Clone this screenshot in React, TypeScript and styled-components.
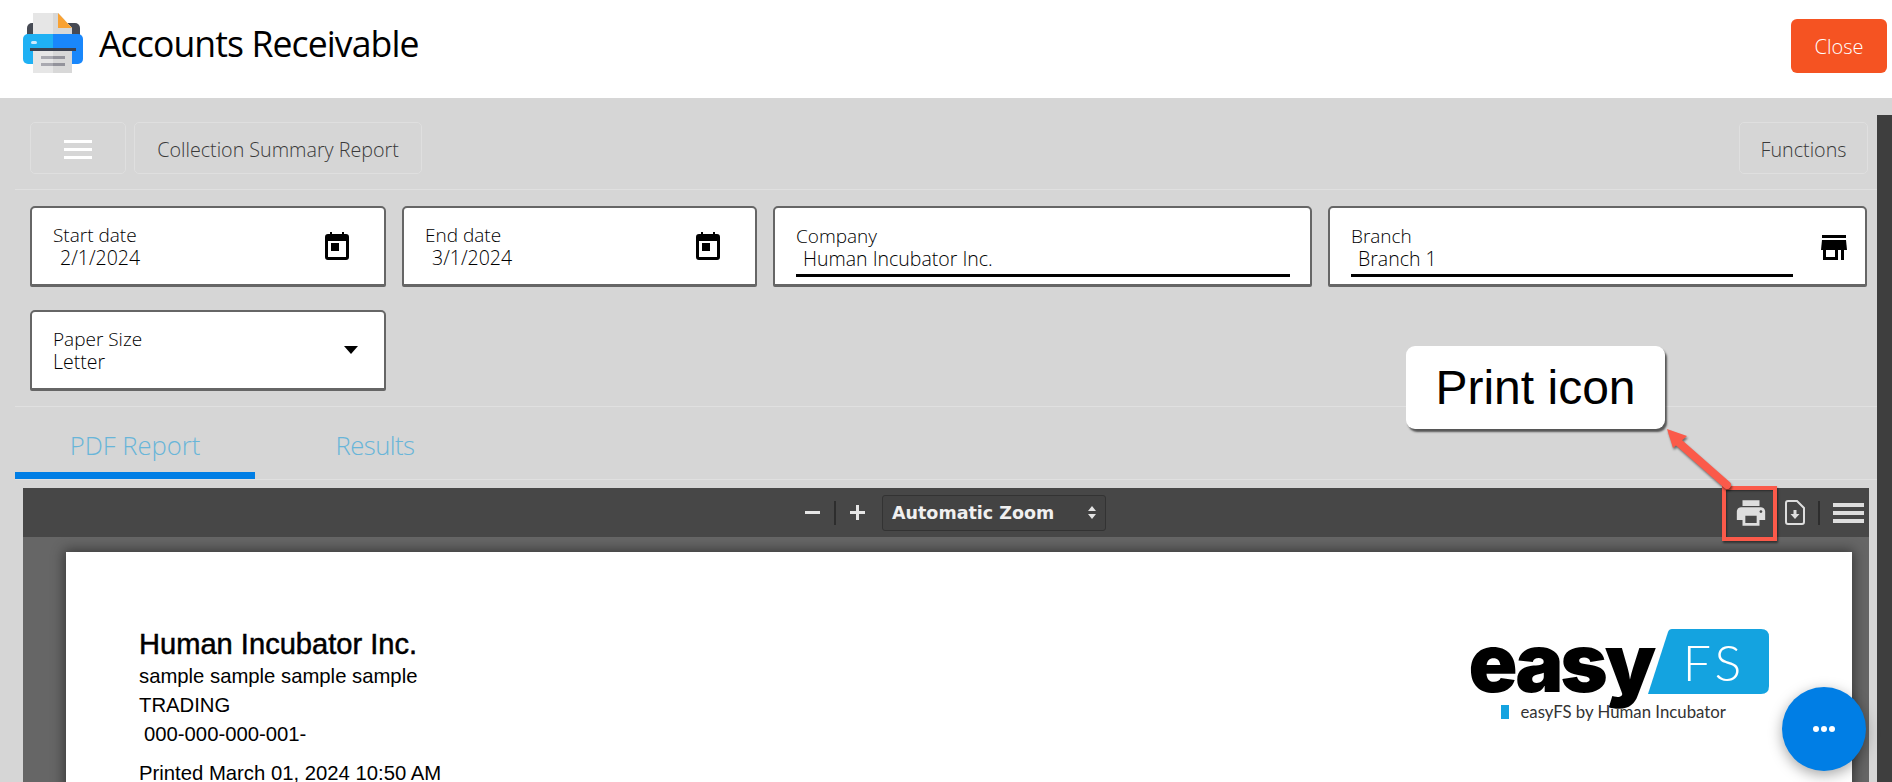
import React from 'react';
import styled, { createGlobalStyle } from 'styled-components';
import { MdPrint } from 'react-icons/md';

const uiFont = `'Open Sans', 'Noto Sans', sans-serif`;
const docFont = `'Liberation Sans', Arial, sans-serif`;

const GlobalStyle = createGlobalStyle`
	html, body {
		margin: 0;
		padding: 0;
		background: #d6d6d6;
		overflow: hidden;
	}
	* {
		box-sizing: border-box;
	}
`;

const Screen = styled.div`
	position: relative;
	display: flex;
	flex-direction: column;
	width: 1892px;
	height: 782px;
	overflow: hidden;
	font-family: ${uiFont};
`;

const Header = styled.header`
	display: flex;
	flex: none;
	align-items: center;
	justify-content: space-between;
	height: 98px;
	padding: 0 5px 6px 23px;
	background: #fff;
`;

const Brand = styled.div`
	display: flex;
	align-items: center;
	gap: 16px;
	margin-top: -6px;
`;

const AppTitle = styled.h1`
	margin: 0;
	font-size: 35.6px;
	font-weight: 400;
	letter-spacing: -0.9px;
	color: #000;
`;

const CloseButton = styled.button`
	width: 96px;
	height: 54px;
	border: 0;
	border-radius: 6px;
	background: #f55322;
	color: #fff;
	font-family: ${uiFont};
	font-size: 20px;
	font-weight: 300;
`;

const Body = styled.div`
	display: flex;
	flex: 1;
	min-height: 0;
	background: #d6d6d6;
`;

const Content = styled.main`
	flex: 1;
	min-width: 0;
`;

const Scrollbar = styled.div`
	flex: none;
	width: 15px;
	margin-top: 17px;
	background: #3e3e3e;
`;

const Toolbar = styled.div`
	display: flex;
	justify-content: space-between;
	height: 92px;
	margin-left: 15px;
	padding: 24px 9px 16px 15px;
	border-bottom: 1px solid #e0e0e0;
`;

const ToolGroup = styled.div`
	display: flex;
	gap: 8px;
`;

const ToolButton = styled.div<{ $width: number }>`
	display: flex;
	align-items: center;
	justify-content: center;
	width: ${({ $width }) => $width}px;
	height: 52px;
	padding-top: 3px;
	border: 1px solid #dfdfdf;
	border-radius: 5px;
	color: #3a3a3a;
	font-size: 19.7px;
	font-weight: 300;
`;

const MenuBars = styled.span<{ $width: number; $color: string; $height: number; $gap: number }>`
	display: flex;
	flex-direction: column;
	gap: ${({ $gap }) => $gap}px;
	width: ${({ $width }) => $width}px;

	i {
		height: ${({ $height }) => $height}px;
		background: ${({ $color }) => $color};
	}
`;

const Filters = styled.section`
	display: grid;
	grid-template-columns: 356px 355px 539px 539px;
	align-content: start;
	gap: 23px 16px;
	height: 217px;
	margin-left: 15px;
	padding: 16px 0 0 15px;
	border-bottom: 1px solid #e0e0e0;
`;

const Field = styled.div<{ $trail: number }>`
	display: flex;
	align-items: center;
	justify-content: space-between;
	height: 81px;
	padding: 0 ${({ $trail }) => $trail}px 0 21px;
	border: 2px solid #666;
	border-bottom-width: 3px;
	border-radius: 5px 5px 2px 2px;
	background: #fff;
`;

const FieldBody = styled.div<{ $underlined?: boolean; $gap?: number }>`
	flex: 1;
	margin-top: ${({ $underlined }) => ($underlined ? '9px' : '1px')};
	margin-right: ${({ $gap }) => $gap ?? 0}px;
	padding-bottom: ${({ $underlined }) => ($underlined ? '4px' : '0')};
	border-bottom: ${({ $underlined }) => ($underlined ? '3px solid #000' : '0')};
`;

const FieldLabel = styled.div`
	height: 23px;
	font-size: 19px;
	font-weight: 300;
	line-height: 22px;
	color: #000;
`;

const FieldValue = styled.div<{ $flush?: boolean }>`
	height: 22px;
	padding-left: ${({ $flush }) => ($flush ? '0' : '7px')};
	font-size: 19.5px;
	font-weight: 300;
	line-height: 22px;
	color: #000;
`;

const Tabs = styled.nav`
	display: flex;
	height: 73px;
	margin-left: 15px;
	border-bottom: 1px solid #e0e0e0;
`;

const Tab = styled.div<{ $active?: boolean }>`
	width: 240px;
	height: 72px;
	padding-top: 21px;
	border-bottom: 7px solid ${({ $active }) => ($active ? '#007ee5' : 'transparent')};
	color: #68b5d9;
	font-size: 25.6px;
	font-weight: 300;
	letter-spacing: ${({ $active }) => ($active ? '0' : '-0.5px')};
	text-align: center;
`;

const Viewer = styled.section`
	width: 1846px;
	height: 400px;
	margin: 8px 0 0 23px;
	background: #666;
`;

const ViewerBar = styled.div`
	position: relative;
	z-index: 1;
	display: flex;
	align-items: center;
	height: 49px;
	padding: 0 5px 0 782px;
	background: #474747;
`;

const ZoomButton = styled.span`
	display: flex;
	align-items: center;
	justify-content: center;
	width: 15px;
	height: 24px;
	color: #e6e6e6;
`;

const BarSeparator = styled.span<{ $gap: number }>`
	width: 2px;
	height: 24px;
	margin: 0 ${({ $gap }) => $gap}px;
	background: #2d2d2d;
`;

const ZoomSelect = styled.div`
	display: flex;
	align-items: center;
	justify-content: space-between;
	width: 224px;
	height: 36px;
	margin-left: 17px;
	padding: 0 9px 0 9px;
	border: 1px solid #333;
	border-radius: 3px;
	background: #434343;
	color: #f0f0f0;
	font-family: 'DejaVu Sans', ${docFont};
	font-size: 17.5px;
	font-weight: 700;
`;

const ViewerActions = styled.div`
	display: flex;
	align-items: center;
	margin-left: auto;
	color: #dedede;
`;

const PrintAction = styled(MdPrint)`
	display: block;
	margin-right: 17px;
`;

const Sheet = styled.article`
	display: flex;
	justify-content: space-between;
	width: 1786px;
	height: 300px;
	margin: 15px 0 0 43px;
	padding: 80px 83px 0 73px;
	background: #fff;
	box-shadow: 0 0 12px 2px rgba(0, 0, 0, 0.45);
	font-family: ${docFont};
	color: #000;
`;

const CompanyName = styled.div`
	height: 30px;
	font-size: 29.1px;
	line-height: 24px;
	-webkit-text-stroke: 0.5px #000;
`;

const SheetLine = styled.div<{ $indent?: boolean; $gap?: number }>`
	height: 29px;
	margin-top: ${({ $gap }) => $gap ?? 0}px;
	padding-left: ${({ $indent }) => ($indent ? '5px' : '0')};
	font-size: 20.3px;
	line-height: 29px;
`;

const LogoBlock = styled.div`
	display: flex;
	flex-direction: column;
	align-items: flex-start;
	margin-top: -6px;
`;

const LogoMark = styled.div`
	display: flex;
	height: 74px;
`;

const LogoWord = styled.span`
	position: relative;
	z-index: 1;
	margin-left: -2px;
	font-family: Inter, ${docFont};
	font-size: 81px;
	font-weight: 900;
	line-height: 74px;
	letter-spacing: -3.2px;
	color: #000;
`;

const LogoBadge = styled.span`
	display: flex;
	align-items: center;
	justify-content: center;
	width: 121px;
	height: 65px;
	margin: 3px 0 0 -5px;
	padding-left: 12px;
	background: #14a3e0;
	clip-path: path('M24 0 H113 Q121 0 121 8 V57 Q121 65 113 65 H0 L20 3 Q21 0 24 0 Z');
	color: #fff;
	font-family: Lato, ${docFont};
	font-size: 50px;
	font-weight: 300;
	letter-spacing: 5px;
`;

const LogoCaption = styled.div`
	display: flex;
	align-items: center;
	gap: 11px;
	margin: 1px 0 0 31px;
	font-family: Lato, ${docFont};
	font-size: 16.8px;
	color: #333;

	i {
		width: 8px;
		height: 14px;
		background: #14a3e0;
	}
`;

const Callout = styled.div`
	position: absolute;
	z-index: 2;
	top: 346px;
	left: 1406px;
	display: flex;
	align-items: center;
	justify-content: center;
	width: 259px;
	height: 83px;
	border-radius: 9px;
	background: #fff;
	box-shadow: 2px 3px 2px rgba(0, 0, 0, 0.6);
	font-family: ${docFont};
	font-size: 48px;
	color: #000;
`;

const CalloutMark = styled.div`
	position: absolute;
	z-index: 2;
	top: 486px;
	left: 1722px;
	width: 55px;
	height: 55px;
	border: 4px solid #fb5a4a;
	box-shadow: 1px 2px 2px rgba(0, 0, 0, 0.5), inset 1px 1px 2px rgba(0, 0, 0, 0.4);
`;

const CalloutArrow = styled.svg`
	position: absolute;
	z-index: 2;
	top: 425px;
	left: 1660px;
	overflow: visible;
	filter: drop-shadow(1px 2px 1px rgba(0, 0, 0, 0.5));
`;

const ChatButton = styled.div`
	position: absolute;
	z-index: 2;
	right: 26px;
	bottom: 11px;
	display: flex;
	align-items: center;
	justify-content: center;
	gap: 2px;
	width: 84px;
	height: 84px;
	border-radius: 50%;
	background: #007ee5;
	box-shadow: 0 4px 14px rgba(0, 0, 0, 0.35);

	i {
		width: 6px;
		height: 6px;
		border-radius: 50%;
		background: #fff;
	}
`;

const StoreGlyph = styled.svg`
	flex: none;
	margin-top: 4px;
`;

const PrinterLogo = () => (
	<svg width="60" height="60" viewBox="0 0 60 60">
		<rect x="4" y="10" width="53" height="20" rx="5" fill="#464a54" />
		<path d="M10 0H35L49 15V25H10Z" fill="#e6e6e6" />
		<path d="M30 0H35L49 15V25H30Z" fill="#d8d8d8" />
		<path d="M35 0L49 15H35Z" fill="#f9a233" />
		<path d="M5 21H30V51H5A5 5 0 0 1 0 46V26A5 5 0 0 1 5 21Z" fill="#1fb1f4" />
		<path d="M30 21H55A5 5 0 0 1 60 26V46A5 5 0 0 1 55 51H30Z" fill="#1987fb" />
		<rect x="8" y="28" width="6" height="3" rx="1.5" fill="#cfeafd" />
		<rect x="7" y="35" width="46" height="3" fill="#3b4150" />
		<rect x="10" y="38" width="20" height="22" fill="#e6e6e6" />
		<rect x="30" y="38" width="19" height="22" fill="#d8d8d8" />
		<rect x="18" y="43" width="12" height="3" fill="#a9a9b0" />
		<rect x="30" y="43" width="12" height="3" fill="#93939b" />
		<rect x="18" y="50" width="12" height="3" fill="#a9a9b0" />
		<rect x="30" y="50" width="12" height="3" fill="#93939b" />
	</svg>
);

const CalendarIcon = () => (
	<svg width="24" height="28" viewBox="0 0 24 28">
		<path
			fillRule="evenodd"
			d="M5 0H7V2H17V0H19V2H21A3 3 0 0 1 24 5V25A3 3 0 0 1 21 28H3A3 3 0 0 1 0 25V5A3 3 0 0 1 3 2H5ZM3 9V25H21V9Z"
			fill="#000"
		/>
		<rect x="6" y="11" width="8" height="8" fill="#000" />
	</svg>
);

const StoreIcon = () => (
	<StoreGlyph width="26" height="26" viewBox="0 0 26 26">
		<rect x="1" y="0" width="24" height="3" fill="#000" />
		<path d="M1 5H25L26 15H0Z" fill="#000" />
		<path fillRule="evenodd" d="M2 15H17V25H2ZM5 15V22H14V15Z" fill="#000" />
		<rect x="20" y="15" width="3" height="10" fill="#000" />
	</StoreGlyph>
);

const CaretIcon = () => (
	<svg width="14" height="8" viewBox="0 0 14 8">
		<path d="M0 0H14L7 8Z" fill="#000" />
	</svg>
);

const SpinIcon = () => (
	<svg width="8" height="13" viewBox="0 0 8 13">
		<path d="M4 0L8 5H0ZM4 13L0 8H8Z" fill="#e4e4e4" />
	</svg>
);

const MinusIcon = () => (
	<svg width="15" height="3" viewBox="0 0 15 3">
		<rect width="15" height="3" fill="currentColor" />
	</svg>
);

const PlusIcon = () => (
	<svg width="15" height="15" viewBox="0 0 15 15">
		<path d="M6 0H9V6H15V9H9V15H6V9H0V6H6Z" fill="currentColor" />
	</svg>
);

const SaveFileIcon = () => (
	<svg width="20" height="25" viewBox="0 0 20 25">
		<path
			d="M3 1H12L19 8V22A2 2 0 0 1 17 24H3A2 2 0 0 1 1 22V3A2 2 0 0 1 3 1Z"
			fill="none"
			stroke="currentColor"
			strokeWidth="2"
		/>
		<path d="M8.5 10H11.5V14H14.5L10 19L5.5 14H8.5Z" fill="currentColor" />
	</svg>
);

const Bars = (props: { width: number; color: string; height: number; gap: number }) => (
	<MenuBars $width={props.width} $color={props.color} $height={props.height} $gap={props.gap}>
		<i />
		<i />
		<i />
	</MenuBars>
);

export default function App() {
	return (
		<Screen>
			<GlobalStyle />
			<Header>
				<Brand>
					<PrinterLogo />
					<AppTitle>Accounts Receivable</AppTitle>
				</Brand>
				<CloseButton>Close</CloseButton>
			</Header>
			<Body>
				<Content>
					<Toolbar>
						<ToolGroup>
							<ToolButton $width={96}>
								<Bars width={28} color="#fff" height={3} gap={5} />
							</ToolButton>
							<ToolButton $width={288}>Collection Summary Report</ToolButton>
						</ToolGroup>
						<ToolButton $width={129}>Functions</ToolButton>
					</Toolbar>
					<Filters>
						<Field $trail={35}>
							<FieldBody>
								<FieldLabel>Start date</FieldLabel>
								<FieldValue>2/1/2024</FieldValue>
							</FieldBody>
							<CalendarIcon />
						</Field>
						<Field $trail={35}>
							<FieldBody>
								<FieldLabel>End date</FieldLabel>
								<FieldValue>3/1/2024</FieldValue>
							</FieldBody>
							<CalendarIcon />
						</Field>
						<Field $trail={20}>
							<FieldBody $underlined>
								<FieldLabel>Company</FieldLabel>
								<FieldValue>Human Incubator Inc.</FieldValue>
							</FieldBody>
						</Field>
						<Field $trail={18}>
							<FieldBody $underlined $gap={28}>
								<FieldLabel>Branch</FieldLabel>
								<FieldValue>Branch 1</FieldValue>
							</FieldBody>
							<StoreIcon />
						</Field>
						<Field $trail={26}>
							<FieldBody>
								<FieldLabel>Paper Size</FieldLabel>
								<FieldValue $flush>Letter</FieldValue>
							</FieldBody>
							<CaretIcon />
						</Field>
					</Filters>
					<Tabs>
						<Tab $active>PDF Report</Tab>
						<Tab>Results</Tab>
					</Tabs>
					<Viewer>
						<ViewerBar>
							<ZoomButton>
								<MinusIcon />
							</ZoomButton>
							<BarSeparator $gap={14} />
							<ZoomButton>
								<PlusIcon />
							</ZoomButton>
							<ZoomSelect>
								Automatic Zoom
								<SpinIcon />
							</ZoomSelect>
							<ViewerActions>
								<PrintAction size={34} />
								<SaveFileIcon />
								<BarSeparator $gap={13} />
								<Bars width={31} color="#dedede" height={4} gap={4} />
							</ViewerActions>
						</ViewerBar>
						<Sheet>
							<div>
								<CompanyName>Human Incubator Inc.</CompanyName>
								<SheetLine>sample sample sample sample</SheetLine>
								<SheetLine>TRADING</SheetLine>
								<SheetLine $indent>000-000-000-001-</SheetLine>
								<SheetLine $gap={10}>Printed March 01, 2024 10:50 AM</SheetLine>
							</div>
							<LogoBlock>
								<LogoMark>
									<LogoWord>easy</LogoWord>
									<LogoBadge>FS</LogoBadge>
								</LogoMark>
								<LogoCaption>
									<i />
									easyFS by Human Incubator
								</LogoCaption>
							</LogoBlock>
						</Sheet>
					</Viewer>
				</Content>
				<Scrollbar />
			</Body>
			<Callout>Print icon</Callout>
			<CalloutMark />
			<CalloutArrow width="70" height="65" viewBox="0 0 70 65">
				<path d="M17 16L67 60" stroke="#fb5a4a" strokeWidth="8" strokeLinecap="round" />
				<path d="M7 4L27 11L13 23Z" fill="#fb5a4a" />
			</CalloutArrow>
			<ChatButton>
				<i />
				<i />
				<i />
			</ChatButton>
		</Screen>
	);
}
